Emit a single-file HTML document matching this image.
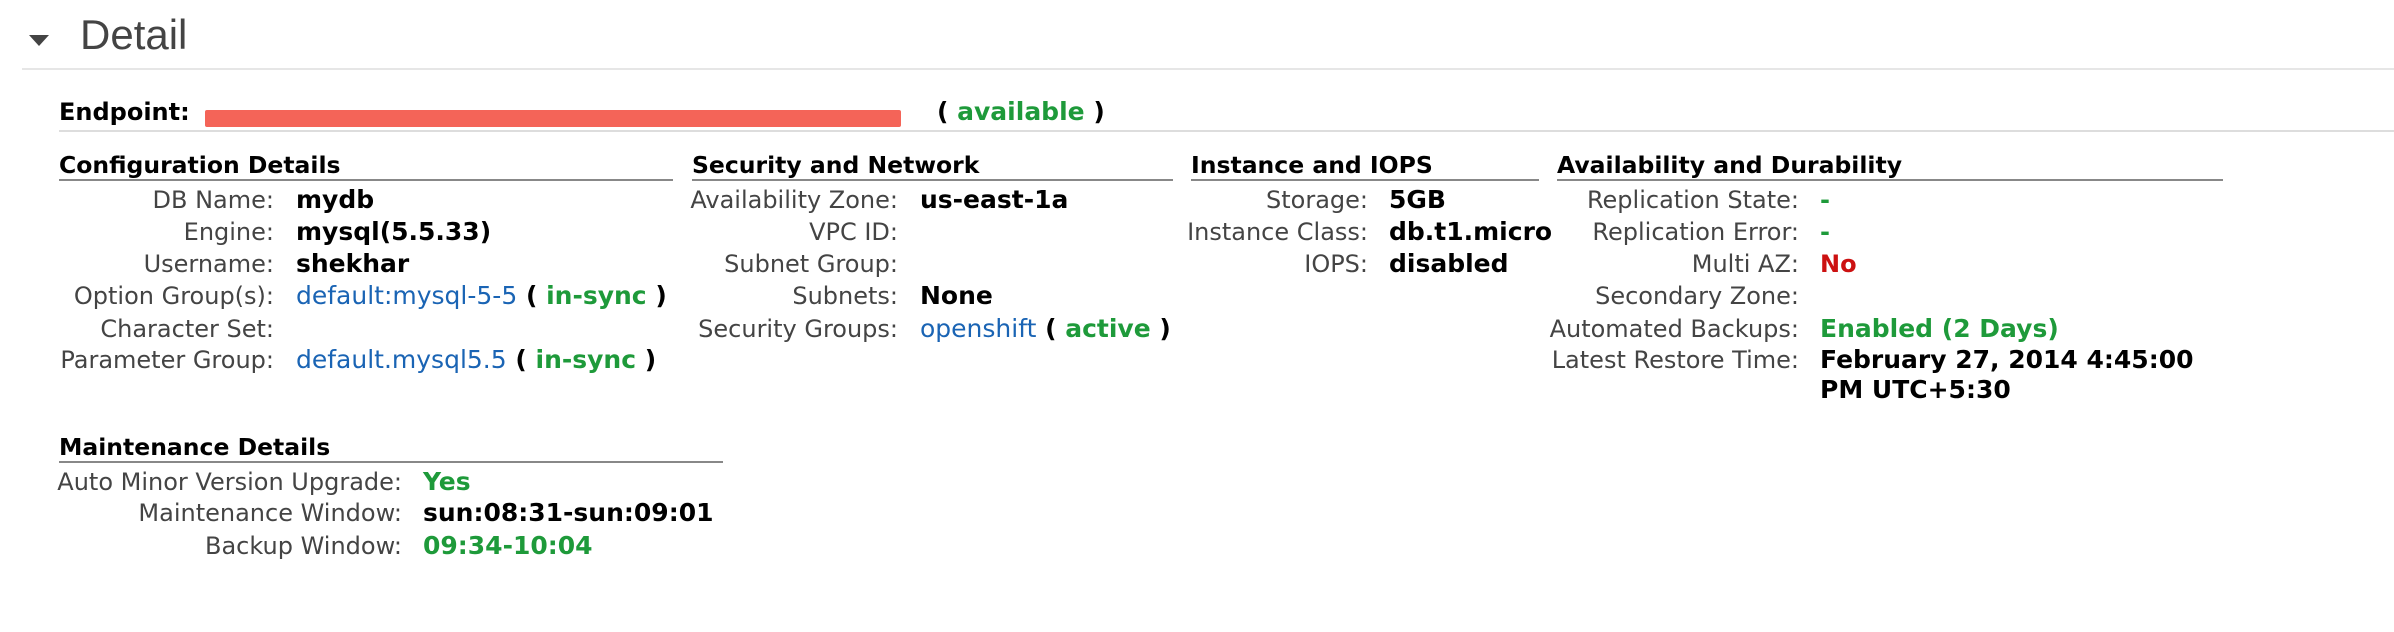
<!DOCTYPE html>
<html><head><meta charset="utf-8"><style>
body{margin:0;width:2394px;height:632px;background:#fff;position:relative;overflow:hidden;font-family:"DejaVu Sans","Liberation Sans",sans-serif;font-size:24px;}
.a{position:absolute;white-space:nowrap;line-height:30px;}
.l{color:#444;text-align:right;font-size:24px;}
.v{font-weight:bold;color:#000;font-size:25px;}
.h{font-weight:bold;color:#000;font-size:23.5px;}
.g{color:#1e9a3a;font-weight:bold;}
.b{color:#1a64b4;font-weight:normal;}
.r{color:#cc1111;font-weight:bold;}
.ln{position:absolute;height:2px;background:#888;}
</style></head><body>
<div style="position:absolute;left:29px;top:35px;width:0;height:0;border-left:10px solid transparent;border-right:10px solid transparent;border-top:11px solid #444;"></div>
<div class="a" style="left:80px;top:12px;font-family:'Liberation Sans',sans-serif;font-size:42px;line-height:46px;color:#444;">Detail</div>
<div style="position:absolute;left:22px;right:0;top:68px;height:2px;background:#e6e6e6;"></div>

<div class="a h" style="left:59px;top:97px;font-size:24px;">Endpoint:</div>
<div style="position:absolute;left:205px;top:110px;width:696px;height:17px;background:#f46458;border-radius:2px;"></div>
<div class="a v" style="left:937px;top:97px;">( <span class="g">available</span> )</div>
<div style="position:absolute;left:59px;right:0;top:130px;height:2px;background:#ddd;"></div>

<div class="a h" style="left:59px;top:150px;">Configuration Details</div>
<div class="ln" style="left:59px;width:614px;top:179px;"></div>
<div class="a h" style="left:692px;top:150px;">Security and Network</div>
<div class="ln" style="left:692px;width:481px;top:179px;"></div>
<div class="a h" style="left:1191px;top:150px;">Instance and IOPS</div>
<div class="ln" style="left:1191px;width:348px;top:179px;"></div>
<div class="a h" style="left:1557px;top:150px;">Availability and Durability</div>
<div class="ln" style="left:1557px;width:666px;top:179px;"></div>

<div class="a l" style="right:2120px;top:185px;">DB Name:</div><div class="a v" style="left:296px;top:185px;">mydb</div>
<div class="a l" style="right:2120px;top:217px;">Engine:</div><div class="a v" style="left:296px;top:217px;">mysql(5.5.33)</div>
<div class="a l" style="right:2120px;top:249px;">Username:</div><div class="a v" style="left:296px;top:249px;">shekhar</div>
<div class="a l" style="right:2120px;top:281px;">Option Group(s):</div><div class="a v" style="left:296px;top:281px;"><span class="b">default:mysql-5-5</span> ( <span class="g">in-sync</span> )</div>
<div class="a l" style="right:2120px;top:314px;">Character Set:</div>
<div class="a l" style="right:2120px;top:345px;">Parameter Group:</div><div class="a v" style="left:296px;top:345px;"><span class="b">default.mysql5.5</span> ( <span class="g">in-sync</span> )</div>

<div class="a l" style="right:1496px;top:185px;">Availability Zone:</div><div class="a v" style="left:920px;top:185px;">us-east-1a</div>
<div class="a l" style="right:1496px;top:217px;">VPC ID:</div>
<div class="a l" style="right:1496px;top:249px;">Subnet Group:</div>
<div class="a l" style="right:1496px;top:281px;">Subnets:</div><div class="a v" style="left:920px;top:281px;">None</div>
<div class="a l" style="right:1496px;top:314px;">Security Groups:</div><div class="a v" style="left:920px;top:314px;"><span class="b">openshift</span> ( <span class="g">active</span> )</div>

<div class="a l" style="right:1026px;top:185px;">Storage:</div><div class="a v" style="left:1389px;top:185px;">5GB</div>
<div class="a l" style="right:1026px;top:217px;">Instance Class:</div><div class="a v" style="left:1389px;top:217px;">db.t1.micro</div>
<div class="a l" style="right:1026px;top:249px;">IOPS:</div><div class="a v" style="left:1389px;top:249px;">disabled</div>

<div class="a l" style="right:595px;top:185px;">Replication State:</div><div class="a g" style="left:1820px;top:185px;">-</div>
<div class="a l" style="right:595px;top:217px;">Replication Error:</div><div class="a g" style="left:1820px;top:217px;">-</div>
<div class="a l" style="right:595px;top:249px;">Multi AZ:</div><div class="a r" style="left:1820px;top:249px;">No</div>
<div class="a l" style="right:595px;top:281px;">Secondary Zone:</div>
<div class="a l" style="right:595px;top:314px;">Automated Backups:</div><div class="a g v" style="left:1820px;top:314px;color:#1e9a3a;">Enabled (2 Days)</div>
<div class="a l" style="right:595px;top:345px;">Latest Restore Time:</div><div class="a v" style="left:1820px;top:345px;">February 27, 2014 4:45:00</div>
<div class="a v" style="left:1820px;top:375px;">PM UTC+5:30</div>

<div class="a h" style="left:59px;top:432px;">Maintenance Details</div>
<div class="ln" style="left:59px;width:664px;top:461px;"></div>
<div class="a l" style="right:1992px;top:467px;">Auto Minor Version Upgrade:</div><div class="a g v" style="left:423px;top:467px;color:#1e9a3a;">Yes</div>
<div class="a l" style="right:1992px;top:498px;">Maintenance Window:</div><div class="a v" style="left:423px;top:498px;">sun:08:31-sun:09:01</div>
<div class="a l" style="right:1992px;top:531px;">Backup Window:</div><div class="a g v" style="left:423px;top:531px;color:#1e9a3a;">09:34-10:04</div>
</body></html>
